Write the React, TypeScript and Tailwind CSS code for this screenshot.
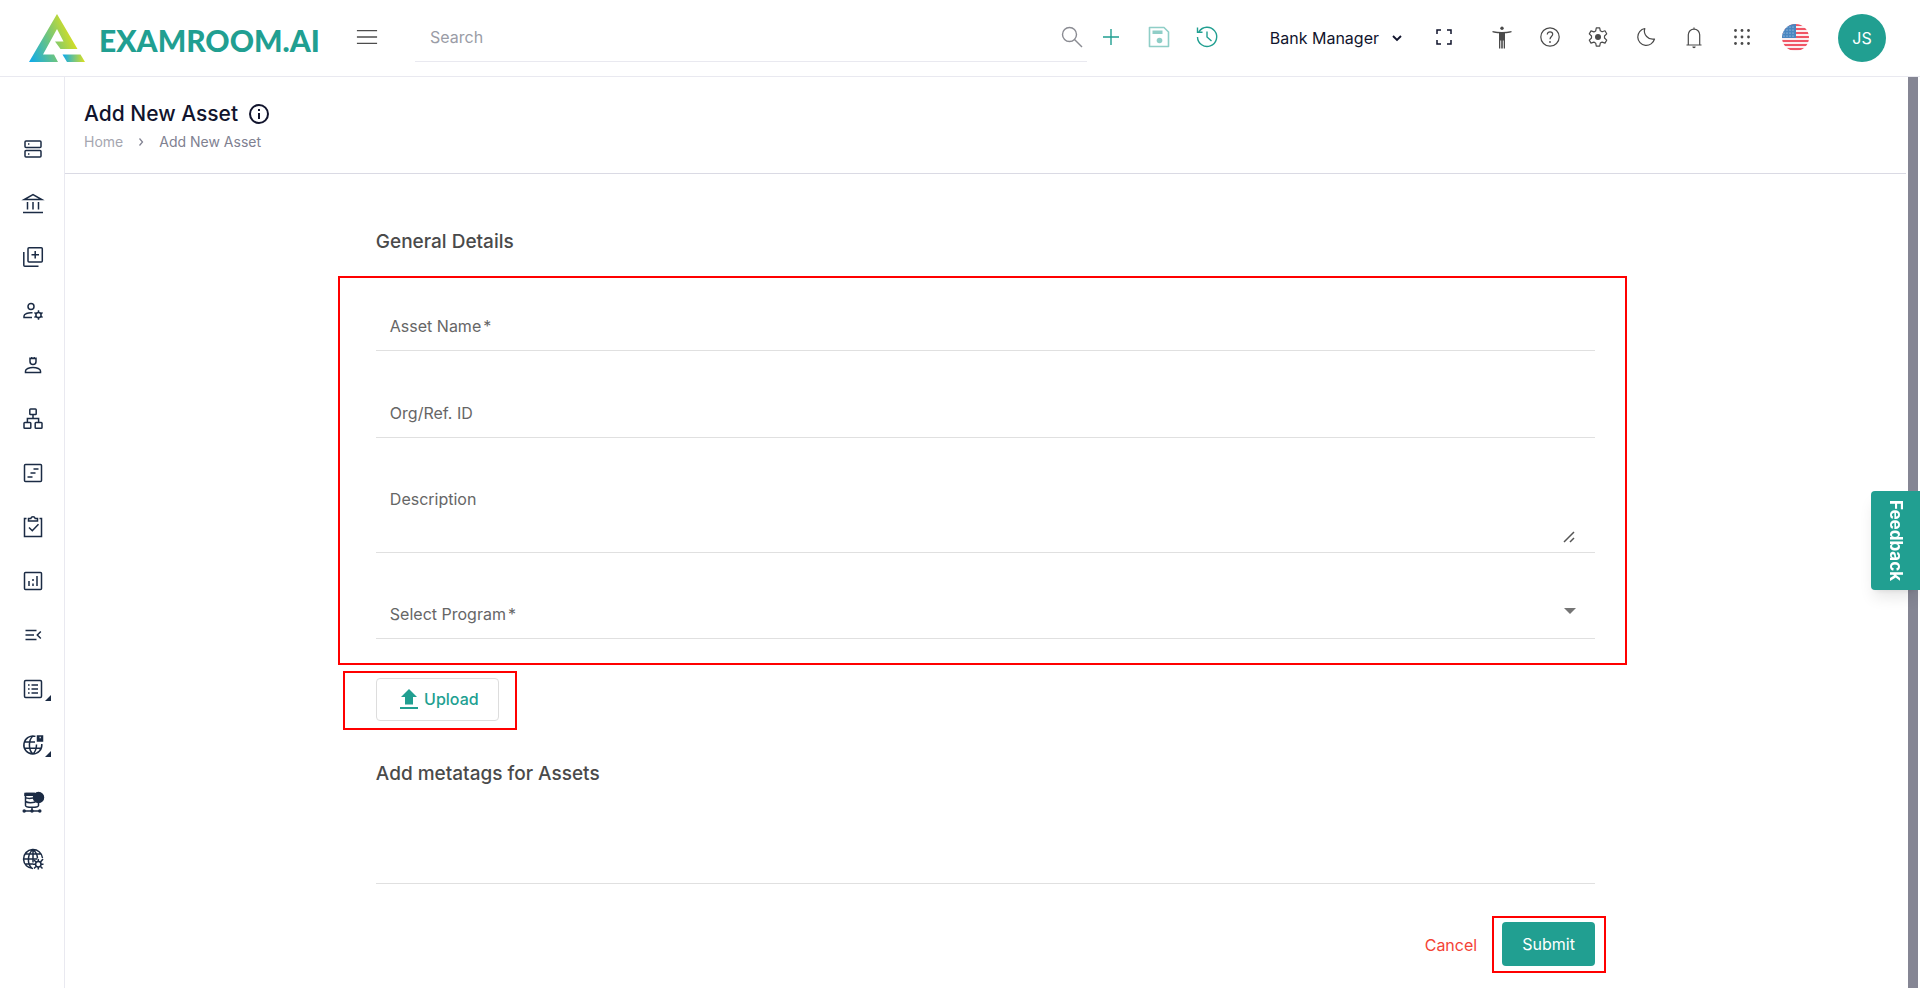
import type { ReactNode } from 'react'

function Icon({
  children,
  className = 'size-6',
  width = 1.4,
}: {
  children: ReactNode
  className?: string
  width?: number
}) {
  return (
    <svg
      viewBox="0 0 24 24"
      fill="none"
      stroke="currentColor"
      strokeWidth={width}
      className={`shrink-0 ${className}`}
      aria-hidden="true"
    >
      {children}
    </svg>
  )
}

// Sidebar entries, the last three sit a little further apart
const menuItems = [
  {
    label: 'Dashboard',
    icon: (
      <>
        <rect x="4" y="4" width="16" height="6.5" rx="1" />
        <rect x="4" y="13.5" width="16" height="6.5" rx="1" />
        <path d="M7 7h1.4M7 17h1.4" />
      </>
    ),
  },
  {
    label: 'Item Bank',
    icon: <path d="M2 21.500h20M3.200 8.500h17.600L12 3.500zM6.500 11v7.500M12 11v7.500M17.500 11v7.500" />,
  },
  {
    label: 'Add Items',
    icon: (
      <>
        <rect x="7" y="2.7" width="14.3" height="14.3" rx="1" />
        <path d="M14.2 6v7.5M10.5 9.8H18M2.8 7v13.2a1 1 0 0 0 1 1H17.5" />
      </>
    ),
  },
  {
    label: 'Manage Users',
    icon: (
      <>
        <circle cx="10" cy="7.5" r="3" />
        <path d="M11.5 13.800c-4.500-.4-8.500 1.200-8.500 3.200V18.500h8" />
        <circle cx="17.500" cy="16" r="2.600" />
        <path d="M17.500 11.300v2M17.500 18.700v2M13.400 13.700l1.800 1M19.800 17.300l1.800 1M13.400 18.300l1.800-1M19.800 14.700l1.800-1" />
      </>
    ),
  },
  {
    label: 'Candidates',
    icon: (
      <>
        <path d="M9 4.500v4a3 3 0 0 0 6 0v-4M8.800 5.500h6.400M10.800 4v1.500M13.200 4v1.500" />
        <path d="M4.500 19.500V18c0-2 3.500-3.500 7.500-3.500s7.500 1.500 7.500 3.500v1.500z" />
      </>
    ),
  },
  {
    label: 'Organization',
    icon: (
      <>
        <rect x="8.8" y="2" width="6.4" height="5.5" rx=".8" />
        <rect x="3" y="15.500" width="6.800" height="5.700" rx=".8" />
        <rect x="14.200" y="15.500" width="6.800" height="5.700" rx=".8" />
        <path d="M12 7.500v4M6.400 15.500v-4h11.200v4" />
      </>
    ),
  },
  {
    label: 'Schedule',
    icon: (
      <>
        <rect x="3.500" y="3.500" width="17" height="17" rx="1" />
        <path d="M12.500 8h5M9.500 12h5M6.500 16h5" />
      </>
    ),
  },
  {
    label: 'Tasks',
    icon: (
      <>
        <path d="M5.500 3.500h-2v18h17v-18h-2" />
        <path d="M7.500 6h9V3.500h-2.300a2.300 2.300 0 0 0-4.400 0H7.500zM8 12.500l3.300 3.300 6.200-6.500" />
      </>
    ),
  },
  {
    label: 'Reports',
    icon: (
      <>
        <rect x="3.500" y="3.500" width="17" height="17" rx="1" />
        <path d="M8 12v5M12 14.500V17M12 10v2M16 7v10" />
      </>
    ),
  },
  {
    label: 'Menu',
    icon: <path d="M4.500 7.500h11M4.500 12h8.500M4.500 16.500h11M19.800 8.500 16.300 12l3.500 3.500" />,
  },
  {
    label: 'Lists',
    nested: true,
    icon: (
      <>
        <rect x="3.500" y="3.500" width="17" height="17" rx="1.200" />
        <path d="M10.500 8H17M10.500 12H17M10.500 16H17M7 8h1.600M7 12h1.600M7 16h1.600" />
      </>
    ),
  },
  {
    label: 'Sites',
    nested: true,
    spaced: true,
    icon: (
      <>
        <path d="M14.500 3.400A9 9 0 1 0 20.800 11M3.800 9H14M3.800 15.200h16.400M12 3c-4.800 4-4.800 14 0 18M12 21c2.500-2.500 3.500-5.500 3.500-9.500" />
        <path d="M16.500 3h5v5h-5z" fill="currentColor" />
        <path d="M18.600 4.600h1.200" stroke="white" />
      </>
    ),
  },
  {
    label: 'Database',
    spaced: true,
    icon: (
      <>
        <path d="M4.500 4v11.500c0 1 3 1.800 6.500 1.800s6.500-.8 6.500-1.800V12M4.500 3.500H14M4.500 7.500c1 .8 5 1 7.500.6M4.500 11.500c2 1.200 7 1.200 10 .5M11 17.300V21M3 21h16" />
        <path d="M4 3.500h9v1.800H4z" fill="currentColor" />
        <circle cx="17.500" cy="7.500" r="5" fill="currentColor" />
        <circle cx="3.200" cy="21" r="1" fill="currentColor" />
        <circle cx="11" cy="21" r="1" fill="currentColor" />
        <circle cx="18.800" cy="21" r="1" fill="currentColor" />
      </>
    ),
  },
  {
    label: 'Web Settings',
    spaced: true,
    icon: (
      <>
        <path d="M12 21.500A9.500 9.500 0 1 1 21.500 11M12 2.500v13M12 2.500c-6 5-6 14-1 19M12 2.500c3.500 3 4.500 6 4.500 9M2.500 12H16M4 7h16M4 17h8" />
        <circle cx="17.300" cy="17.300" r="2.700" />
        <path d="m13 13 2 2M19.500 15l2.500-3M13 21.500l2-2M19.500 19.500l2 2M17.300 12v2.500M17.300 20v2.500M20 17.300h2.500M14.500 17.300H12" />
      </>
    ),
  },
]

const headerActions = [
  {
    label: 'Accessibility',
    icon: (
      <>
        <circle cx="12" cy="3.300" r="1.700" fill="currentColor" stroke="none" />
        <path
          d="M2.500 6c6 1.300 13 1.300 19 0v1.200c-2.500.6-4.500.9-6.500 1.100V23.500h-1.300V15.500h-.9v8h-1.600v-8h-.9v8H9V8.300c-2-.2-4-.5-6.500-1.100z"
          fill="currentColor"
          stroke="none"
        />
      </>
    ),
  },
  {
    label: 'Help',
    icon: (
      <>
        <circle cx="12" cy="12" r="9.200" />
        <path d="M9.300 9.500c0-3.600 5.400-3.300 5.400-.3 0 2.200-2.700 2.400-2.700 5" />
        <circle cx="12" cy="17" r=".9" fill="currentColor" stroke="none" />
      </>
    ),
  },
  {
    label: 'Settings',
    icon: (
      <>
        <path
          d="M10.300 2.800h3.400l.6 3 1.800 1 2.900-1 1.700 3L18.500 11v2l2.200 2.100-1.700 3-2.900-1-1.800 1-.6 3.100h-3.400l-.6-3-1.800-1.100-2.900 1-1.700-3L5.500 13v-2L3.300 8.900l1.700-3 2.900 1 1.800-1z"
          strokeLinejoin="round"
        />
        <circle cx="12" cy="12" r="3" fill="currentColor" stroke="none" />
      </>
    ),
  },
  {
    label: 'Dark mode',
    icon: <path d="M10.800 3.500A8.500 8.500 0 1 0 20.500 14 8.300 8.300 0 0 1 10.800 3.500z" strokeLinejoin="round" />,
  },
  {
    label: 'Notifications',
    icon: (
      <>
        <path d="M4.500 20h15M6.300 20V9.800a5.700 5.700 0 0 1 11.400 0V20M12 2.500v1.800" />
        <path d="M10.300 21.500h3.400a1.700 1.700 0 0 1-3.400 0z" fill="currentColor" stroke="none" />
      </>
    ),
  },
  {
    label: 'Apps',
    icon: (
      <g fill="currentColor" stroke="none">
        {[5.5, 12, 18.5].map((y) =>
          [5.5, 12, 18.5].map((x) => <circle key={`${x}-${y}`} cx={x} cy={y} r="1.4" />)
        )}
      </g>
    ),
  },
]

function Logo() {
  return (
    <a href="#" className="flex items-center" aria-label="Examroom.ai home">
      <svg viewBox="0 0 56 48" className="h-12 w-14 shrink-0" aria-hidden="true">
        <defs>
          <linearGradient id="mark" x1="0" y1="1" x2="1" y2="0.6">
            <stop offset="0" stopColor="#0aaaf0" />
            <stop offset="0.5" stopColor="#6cc481" />
            <stop offset="1" stopColor="#dde01c" />
          </linearGradient>
          <linearGradient id="foot" x1="0" y1="0" x2="1" y2="0">
            <stop offset="0" stopColor="#0aaaf0" />
            <stop offset="1" stopColor="#dde01c" />
          </linearGradient>
        </defs>
        <path d="M28 0 48.500 35H31.500L26 27.500h8.500L28 15 14 40.500h11L29 48H0z" fill="url(#mark)" />
        <path d="M33.500 40.500H51.500L56 48H38z" fill="url(#foot)" />
      </svg>
      <span className="mt-1 ml-[14px] font-['Lato',sans-serif] text-[30px] leading-8 font-black text-[#219f91]">
        EXAMROOM.AI
      </span>
    </a>
  )
}

function Flag() {
  return (
    <svg viewBox="0 0 27 27" className="size-[27px]" aria-hidden="true">
      <clipPath id="flag">
        <circle cx="13.5" cy="13.5" r="13.5" />
      </clipPath>
      <g clipPath="url(#flag)">
        <rect width="27" height="27" fill="#fbeef0" />
        {[0, 4, 8, 12, 16, 20, 24].map((y) => (
          <rect key={y} y={y} width="27" height="2" fill="#f05565" />
        ))}
        <rect width="14" height="14" fill="#4a86c0" />
        {[3, 6, 9, 12].map((y) =>
          [2, 5, 8, 11].map((x) => <circle key={`${x}-${y}`} cx={x} cy={y} r=".6" fill="#cfe0f0" />)
        )}
      </g>
    </svg>
  )
}

function Header() {
  return (
    <header className="flex h-[77px] shrink-0 items-center border-b border-[#e9e9f0] pr-[34px] pl-[29px]">
      <div className="flex w-[327px] items-center">
        <Logo />
      </div>
      <button type="button" aria-label="Toggle menu" className="pb-[2px] text-[#4d4d4d]">
        <Icon className="size-[22px]" width={1.5}>
          <path d="M1 5h22M1 12h22M1 19h22" />
        </Icon>
      </button>

      <label className="ml-[37px] flex h-12 flex-1 items-center border-b border-[#e9e9f0] pr-[3px] pb-[2px] pl-[15px]">
        <input
          type="search"
          aria-label="Search"
          placeholder="Search"
          className="min-w-0 flex-1 text-base outline-none placeholder:text-[#9a9ca6]"
        />
        <Icon className="size-6 text-[#8a8b92]" width={1.4}>
          <circle cx="9.5" cy="9.5" r="7" />
          <path d="m14.500 14.500 7.500 7.500" />
        </Icon>
      </label>

      <div className="flex items-center pb-[2px] text-[#219f91]">
        <button type="button" aria-label="Add" className="flex w-12 justify-center">
          <Icon>
            <path d="M12 4v16M4 12h16" />
          </Icon>
        </button>
        <button type="button" aria-label="Save" className="flex w-12 justify-center opacity-50">
          <Icon width={1.6}>
            <path d="M2.500 2.500H17l4.500 4.500v14.500h-19z" strokeLinejoin="round" />
            <path d="M5.500 5.500h10V9h-10z" fill="currentColor" stroke="none" />
            <circle cx="12.500" cy="15.500" r="2.800" fill="currentColor" stroke="none" />
          </Icon>
        </button>
        <button type="button" aria-label="History" className="flex w-12 justify-center">
          <Icon>
            <path d="M2.500 12A9.600 9.600 0 1 0 4 6.700M2.500 2.500v4.700h5M12 6.500V12l4.500 4" />
          </Icon>
        </button>
      </div>

      <button type="button" className="ml-[39px] flex items-center gap-[10px] text-base text-[#11142d]">
        Bank Manager
        <Icon className="size-4" width={2.8}>
          <path d="m6 9 6 6 6-6" />
        </Icon>
      </button>
      <div className="ml-[15px] flex items-center pb-[2px] text-[#4a4a4a]">
        <button type="button" aria-label="Full screen" className="mr-[10px] flex w-12 justify-center text-[#11142d]">
          <Icon width={1.5}>
            <path d="M9 5H5v4M15 5h4v4M9 19H5v-4M15 19h4v-4" />
          </Icon>
        </button>
        {headerActions.map((action) => (
          <button key={action.label} type="button" aria-label={action.label} className="flex w-12 justify-center">
            <Icon width={1.2}>{action.icon}</Icon>
          </button>
        ))}
      </div>
      <button type="button" aria-label="Language" className="ml-4 pb-[2px]">
        <Flag />
      </button>
      <button
        type="button"
        className="ml-[29px] flex size-12 items-center justify-center rounded-full bg-[#219f91] text-base text-white"
      >
        JS
      </button>
    </header>
  )
}

function Sidebar() {
  return (
    <nav className="w-[65px] shrink-0 border-r border-[#e9e9f0] pt-[45px]">
      {menuItems.map((item) => (
        <a
          key={item.label}
          href="#"
          aria-label={item.label}
          className={`flex items-center justify-center pl-[2px] text-[#1b2b44] ${item.spaced ? 'h-[57px]' : 'h-[54px]'}`}
        >
          <span className="relative">
            <Icon width={1.5}>{item.icon}</Icon>
            {item.nested && (
              <svg viewBox="0 0 6 6" className="absolute -right-[6px] bottom-0 size-[6px]" aria-hidden="true">
                <path d="M6 0v6H0z" fill="currentColor" />
              </svg>
            )}
          </span>
        </a>
      ))}
    </nav>
  )
}

const labelClass = 'pointer-events-none absolute top-3 left-[14px] text-base leading-6 text-[#666666]'

function AssetForm() {
  return (
    <form className="mx-auto w-2/3 px-1 pt-14" onSubmit={(e) => e.preventDefault()}>
      <h2 className="text-[19px] leading-6 font-medium text-[#4a4a4a]">General Details</h2>

      <div className="mt-[22px] -mr-8 -ml-[38px] border-2 border-[#ff0000] pt-6 pr-[30px] pb-6 pl-9">
        <div className="relative border-b border-[#e0e0e0]">
          <label htmlFor="assetName" className={labelClass}>
            Asset Name<span className="ml-[2px]">*</span>
          </label>
          <input id="assetName" type="text" className="block h-12 w-full px-[14px] outline-none" />
        </div>
        <div className="relative mt-[38px] border-b border-[#e0e0e0]">
          <label htmlFor="refId" className={labelClass}>
            Org/Ref. ID
          </label>
          <input id="refId" type="text" className="block h-12 w-full px-[14px] outline-none" />
        </div>
        <div className="relative mt-[37px] border-b border-[#e0e0e0] pr-[18px] pb-2">
          <label htmlFor="description" className={labelClass}>
            Description
          </label>
          <textarea id="description" className="block h-[69px] w-full resize-none px-[14px] pt-3 outline-none" />
          <svg
            viewBox="0 0 12 12"
            className="pointer-events-none absolute right-5 bottom-[9px] size-3 text-[#555555]"
            aria-hidden="true"
          >
            <path d="M1 11 11 1M7 11l4-4" stroke="currentColor" strokeWidth="1.5" />
          </svg>
        </div>
        <div className="relative mt-[37px] border-b border-[#e0e0e0]">
          <label htmlFor="program" className={labelClass}>
            Select Program<span className="ml-[2px]">*</span>
          </label>
          <select id="program" className="block h-12 w-full appearance-none px-[14px] outline-none">
            <option value=""></option>
          </select>
          <svg
            viewBox="0 0 12 6"
            className="pointer-events-none absolute top-[18px] right-[19px] h-[6px] w-3 text-[#757575]"
            aria-hidden="true"
          >
            <path d="M0 0h12L6 6z" fill="currentColor" />
          </svg>
        </div>
      </div>

      <div className="mt-[6px] -ml-[33px] flex w-fit border-2 border-[#ff0000] pt-[5px] pr-4 pb-[7px] pl-[31px]">
        <button
          type="button"
          className="flex h-[43px] w-[123px] items-center justify-center gap-[6px] rounded border border-[#dddddd] pb-[2px] pl-1 text-base font-medium text-[#219f91]"
        >
          <svg viewBox="0 0 18 20" className="h-5 w-[18px]" aria-hidden="true">
            <path d="M9 0l8 8h-4v7.500H5V8H1zM0 18h18v2H0z" fill="currentColor" />
          </svg>
          Upload
        </button>
      </div>

      <label htmlFor="metatags" className="mt-8 block text-[19px] leading-6 font-medium text-[#4a4a4a]">
        Add metatags for Assets
      </label>
      <input
        id="metatags"
        type="text"
        className="mt-[50px] block h-12 w-full border-b border-[#e0e0e0] px-[14px] outline-none"
      />

      <div className="mt-8 -mr-[11px] flex items-center justify-end gap-[15px]">
        <button type="button" className="text-base text-[#f44336]">
          Cancel
        </button>
        <div className="border-2 border-[#ff0000] pt-1 pr-[9px] pb-[5px] pl-2">
          <button type="submit" className="block h-11 w-[93px] rounded bg-[#219f91] text-base text-white">
            Submit
          </button>
        </div>
      </div>
    </form>
  )
}

export default function App() {
  return (
    <div className="flex h-screen flex-col overflow-hidden bg-white font-['Inter',sans-serif]">
      <Header />
      <div className="flex min-h-0 flex-1">
        <Sidebar />
        <main className="min-w-0 flex-1 overflow-hidden">
          <div className="border-b border-[#dadae4] pt-[23px] pb-[21px] pl-[19px]">
            <h1 className="flex items-center gap-[9px] text-[21px] leading-7 font-medium text-[#11142d]">
              Add New Asset
              <Icon className="size-6" width={2}>
                <circle cx="12" cy="12" r="9" />
                <path d="M12 11v6M12 7v2" />
              </Icon>
            </h1>
            <nav aria-label="Breadcrumb" className="mt-1 flex items-center text-sm leading-5 text-[#808191]">
              <a href="#" className="text-[#a5a6b0]">
                Home
              </a>
              <Icon className="mx-3 size-3" width={2.5}>
                <path d="m9 5 6 7-6 7" />
              </Icon>
              <span>Add New Asset</span>
            </nav>
          </div>
          <AssetForm />
        </main>
        {/* Scroll track */}
        <div className="mr-[2px] ml-[2px] w-[10px] shrink-0 bg-[#858694]" />
      </div>

      <button
        type="button"
        className="fixed top-[491px] right-0 flex h-[99px] w-[49px] items-center justify-center rounded-l bg-[#219f91] text-[17px] font-bold text-white shadow-lg [writing-mode:vertical-rl]"
      >
        Feedback
      </button>
    </div>
  )
}
